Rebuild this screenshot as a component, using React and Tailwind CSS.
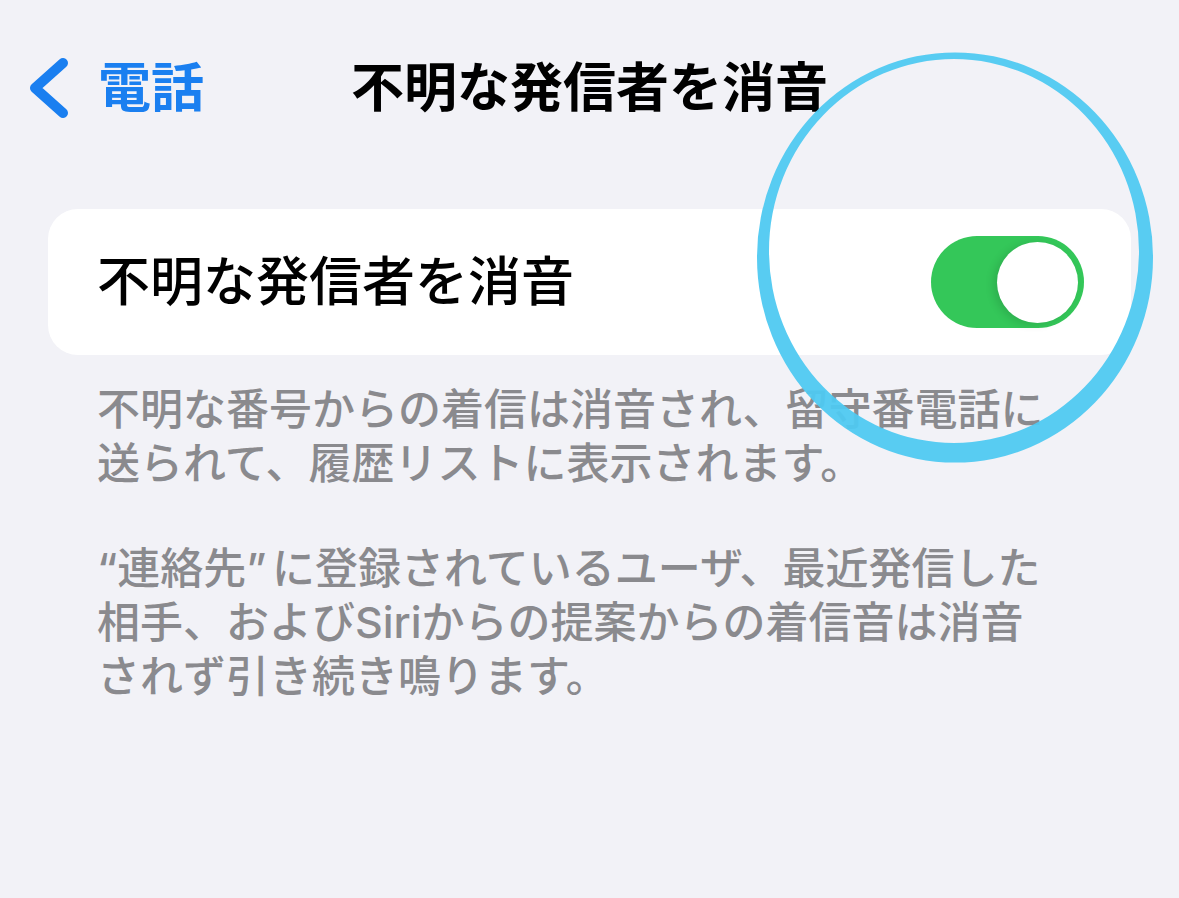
import { useState } from 'react'

/* iOS 設定 > 電話 > 不明な発信者を消音 */

function Toggle({ on, onChange }) {
  return (
    <button
      onClick={() => onChange(!on)}
      className={`relative flex h-[92px] w-[153px] shrink-0 items-center rounded-full px-[6px] transition-colors ${
        on ? 'justify-end bg-[#34c759]' : 'justify-start bg-[#e9e9eb]'
      }`}
    >
      <span className="block h-[81px] w-[81px] rounded-full bg-white shadow-[-4px_2px_8px_rgba(0,0,0,0.12)]" />
    </button>
  )
}

/* 手描きっぽい水色の丸 */
function Ring() {
  return (
    <svg
      className="pointer-events-none absolute left-0 top-0"
      width="1179"
      height="898"
      viewBox="0 0 1179 898"
    >
      <path
        fillRule="evenodd"
        fill="#4fc9f1"
        fillOpacity="0.95"
        d="M757 257.5a198 205 0 1 0 396 0a198 205 0 1 0 -396 0Z M769 251a185 192 0 1 0 370 0a185 192 0 1 0 -370 0Z"
      />
    </svg>
  )
}

export default function App() {
  const [silence, setSilence] = useState(true)

  return (
    <div
      className="relative h-[898px] w-full overflow-hidden bg-[#f2f2f7]"
      style={{ fontFamily: '"Inter", "Noto Sans CJK JP", sans-serif' }}
    >
      {/* ナビゲーションバー */}
      <div className="mt-[38px] grid h-[100px] grid-cols-[1fr_auto_1fr] items-center">
        <button className="flex items-center gap-[28px] pl-[28px] text-[#1a7ff0]">
          <svg width="42" height="62" viewBox="0 0 42 62" fill="none">
            <path
              d="M35 6L7 31l28 25"
              stroke="currentColor"
              strokeWidth="10"
              strokeLinecap="round"
              strokeLinejoin="round"
            />
          </svg>
          <span className="text-[53px] font-bold leading-none">電話</span>
        </button>
        <h1 className="text-[53px] font-bold leading-none text-black">不明な発信者を消音</h1>
        <div />
      </div>

      {/* 設定カード */}
      <div className="mx-[48px] mt-[71px] flex h-[146px] items-center justify-between rounded-[30px] bg-white pl-[49px] pr-[47px]">
        <span className="text-[53px] font-medium leading-none text-black">不明な発信者を消音</span>
        <Toggle on={silence} onChange={setSilence} />
      </div>

      {/* 説明 */}
      <div className="flex flex-col gap-[51px] px-[97px] pt-[27px] text-[43px] font-medium leading-[54px] text-[#8a8a8e]">
        <p>
          不明な番号からの着信は消音され、留守番電話に
          <br />
          送られて、履歴リストに表示されます。
        </p>
        <p>
          “連絡先”<span className="tracking-[-6px]"> </span>に登録されているユーザ、最近発信した
          <br />
          相手、およびSiriからの提案からの着信音は消音
          <br />
          されず引き続き鳴ります。
        </p>
      </div>

      <Ring />
    </div>
  )
}
